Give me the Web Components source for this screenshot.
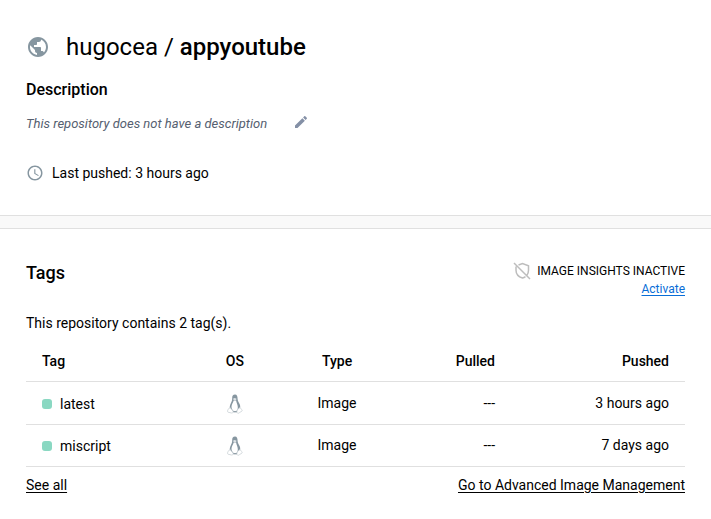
<!DOCTYPE html>
<html lang="en">
<head>
<meta charset="utf-8">
<title>hugocea / appyoutube</title>
<style>
  body {
    margin: 0;
    background: #fff;
    color: #000;
    font: 400 14px/20px Roboto, "Liberation Sans", sans-serif;
  }
</style>
</head>
<body>
<repo-page></repo-page>

<template id="icon-globe">
  <svg viewBox="0 0 24 24"><path d="M12 2C6.48 2 2 6.48 2 12s4.48 10 10 10 10-4.480 10-10S17.520 2 12 2zm-1 17.930c-3.950-.490-7-3.850-7-7.930 0-.620.080-1.210.210-1.790L9 15v1c0 1.100.900 2 2 2v1.930zm6.900-2.540c-.260-.810-1-1.390-1.900-1.390h-1v-3c0-.550-.450-1-1-1H8v-2h2c.550 0 1-.450 1-1V7h2c1.100 0 2-.900 2-2v-.410c2.930 1.190 5 4.060 5 7.410 0 2.080-.800 3.970-2.100 5.390z"/></svg>
</template>
<template id="icon-pencil">
  <svg viewBox="0 0 24 24"><path d="M3 17.250V21h3.750L17.810 9.940l-3.750-3.750L3 17.250zM20.710 7.040c.390-.390.390-1.020 0-1.410l-2.340-2.340c-.390-.390-1.020-.390-1.410 0l-1.830 1.830 3.750 3.750 1.830-1.830z"/></svg>
</template>
<template id="icon-clock">
  <svg viewBox="0 0 24 24"><path d="M11.990 2C6.470 2 2 6.480 2 12s4.470 10 9.990 10C17.520 22 22 17.520 22 12S17.520 2 11.990 2zM12 20c-4.420 0-8-3.580-8-8s3.580-8 8-8 8 3.580 8 8-3.580 8-8 8zm.500-13H11v6l5.250 3.150.750-1.230-4.500-2.670z"/></svg>
</template>
<template id="icon-shield-off">
  <svg viewBox="0 0 18 18" fill="none" stroke="currentColor" stroke-width="1.500"><path d="M5.500 3 9.500 1.500l6 2.200v4.600c0 1.900-.600 3.600-1.600 5M3 4.500v3.800c0 3.800 2.700 6.600 6.500 7.700 1.100-.300 2.100-.800 3-1.400M1 1l16 16"/></svg>
</template>
<template id="icon-linux">
  <svg viewBox="0 0 16 20">
    <path d="M8 .500C6 .500 5 2 5.200 4.500 5.300 7 4 8.500 3.200 10.700c-.600 1.600-.500 3-.200 4.300L6 18h4l3-3c.400-1.800.300-3.200-.300-4.700-.800-2-2-3.200-2.100-5.300C10.500 2 10 .500 8 .500z" fill="#8696a0"/>
    <path d="M6.700 6.500C6 9 4.700 10.300 4.500 12.500c-.100 1.800.800 3.500 2.200 4.500h2.700c1-.800 1.500-2.200 1.400-4-.100-2.500-1.300-4-1.700-6.500z" fill="#fff"/>
    <path d="M6.200 4.600 7.800 4l1.700.700-.300 1.100-1.400.700-1.400-.800z" fill="#dfe4e7"/>
    <path d="M3 13.500 6 17c.500 1-.300 2.200-1.500 2L1 18.200c-.700-.300-.300-1.200-.300-2 0-.700.300-1 1-1.200zM13 13.500l-2.500 2c-.400 1-.800 2.300-.400 3.200.500.900 1.600.600 2.300 0l2.600-1.700c.500-.500 0-1-.400-1.500z" fill="#fff" stroke="#c3cbd0" stroke-width=".7"/>
    <path d="M6.300 18.200h3.500" stroke="#b5bec4" stroke-width=".8"/>
  </svg>
</template>

<template id="t-page">
  <style>:host { display: block; }</style>
  <repo-summary owner="hugocea" name="appyoutube" pushed="3 hours ago">This repository does not have a description</repo-summary>
  <section-band></section-band>
  <tags-panel></tags-panel>
</template>

<template id="t-summary">
  <style>
    :host { display: flex; flex-direction: column; align-items: flex-start; padding: 30px 26px 32px; }
    h1, h2, p { margin: 0; }
    h1 { display: flex; align-items: center; gap: 16px; font-size: 24px; line-height: 34px; font-weight: 400; }
    h1 b { font-weight: 500; }
    h2 { margin-top: 14px; font-size: 16px; line-height: 24px; font-weight: 500; }
    .desc { display: flex; align-items: flex-start; gap: 26px; margin-top: 12px; font-size: 13px; font-style: italic; color: #556070; }
    button { display: flex; padding: 0; border: 0; background: none; color: #8490a6; cursor: pointer; }
    .pushed { display: flex; align-items: center; gap: 8px; margin-top: 29px; }
    ui-icon { color: #8696a0; }
    button ui-icon { color: inherit; }
  </style>
  <h1><ui-icon name="globe" size="24"></ui-icon><span><span id="owner"></span> / <b id="name"></b></span></h1>
  <h2>Description</h2>
  <div class="desc"><slot></slot><button type="button" aria-label="Edit description"><ui-icon name="pencil" size="16"></ui-icon></button></div>
  <p class="pushed"><ui-icon name="clock" size="18"></ui-icon><span>Last pushed: <span id="pushed"></span></span></p>
</template>

<template id="t-band">
  <style>:host { display: block; height: 12px; background: #f9f9f9; border: solid #e0e0e0; border-width: 1px 0; }</style>
</template>

<template id="t-panel">
  <style>
    :host { display: block; padding: 33px 26px 24px; }
    header, footer { display: flex; justify-content: space-between; }
    h2, p { margin: 0; }
    h2 { font-size: 18px; line-height: 22px; font-weight: 500; }
    .insights { display: flex; flex-direction: column; align-items: flex-end; font-size: 12px; line-height: 18px; }
    .status { display: flex; align-items: center; gap: 6px; }
    .status ui-icon { color: #bdbdbd; }
    .count { margin-top: 15px; }
    a { color: inherit; text-underline-offset: 2px; }
    .activate { color: #086dd7; }
    footer { margin-top: 8px; }
  </style>
  <header>
    <h2>Tags</h2>
    <div class="insights">
      <span class="status"><ui-icon name="shield-off" size="18"></ui-icon>IMAGE INSIGHTS INACTIVE</span>
      <a class="activate" href="#activate">Activate</a>
    </div>
  </header>
  <p class="count">This repository contains 2 tag(s).</p>
  <tag-table></tag-table>
  <footer>
    <a href="#tags">See all</a>
    <a href="#manage">Go to Advanced Image Management</a>
  </footer>
</template>

<template id="t-table">
  <style>
    :host { display: block; margin-top: 8px; }
    table { width: 100%; table-layout: fixed; border-collapse: collapse; }
    th, td { padding: 11px 16px; border-bottom: 1px solid #e0e0e0; text-align: center; }
    th { padding: 10px 16px; font-weight: 500; }
    td:nth-child(-n+2) { padding: 12px 16px 10px; }
    tr:last-child td { padding: 10px 16px 11px; }
    tr:last-child td:nth-child(-n+2) { padding: 11px 16px 10px; }
    th:first-child, td:first-child { text-align: left; }
    th:nth-child(n+4), td:nth-child(n+4) { text-align: right; }
    .tag { width: 26%; } .os { width: 11.4%; } .type { width: 19.6%; } .pulled { width: 16.6%; }
    thead th { padding: 10px 16px; }
    td ui-icon { margin: 0 auto; }
  </style>
  <table>
    <colgroup><col class="tag"><col class="os"><col class="type"><col class="pulled"><col></colgroup>
    <thead><tr><th scope="col">Tag</th><th scope="col">OS</th><th scope="col">Type</th><th scope="col">Pulled</th><th scope="col">Pushed</th></tr></thead>
    <tbody>
      <tr><td><tag-name>latest</tag-name></td><td><ui-icon name="linux" size="20"></ui-icon></td><td>Image</td><td>---</td><td>3 hours ago</td></tr>
      <tr><td><tag-name>miscript</tag-name></td><td><ui-icon name="linux" size="20"></ui-icon></td><td>Image</td><td>---</td><td>7 days ago</td></tr>
    </tbody>
  </table>
</template>

<template id="t-tag">
  <style>
    :host { display: flex; align-items: center; gap: 8px; }
    i { width: 10px; height: 10px; border-radius: 3px; background: #8ad8c2; }
  </style>
  <i></i><slot></slot>
</template>

<script>
  const copy = id => document.getElementById(id).content.cloneNode(true);

  class TemplateElement extends HTMLElement {
    connectedCallback() {
      if (this.shadowRoot) return;
      this.attachShadow({ mode: "open" }).append(copy(this.constructor.template));
      this.ready();
    }
    ready() {}
  }

  class UiIcon extends HTMLElement {
    connectedCallback() {
      if (this.shadowRoot) return;
      const size = Number(this.getAttribute("size"));
      const root = this.attachShadow({ mode: "open" });
      root.innerHTML = `<style>
        :host { display: block; width: ${size}px; height: ${size}px; flex: none; }
        svg { display: block; width: 100%; height: 100%; fill: currentColor; }
        svg[fill="none"] { fill: none; }
      </style>`;
      root.append(copy("icon-" + this.getAttribute("name")));
      root.querySelector("svg").setAttribute("aria-hidden", "true");
    }
  }

  class RepoSummary extends TemplateElement {
    static template = "t-summary";
    ready() {
      for (const key of ["owner", "name", "pushed"])
        this.shadowRoot.getElementById(key).textContent = this.getAttribute(key);
    }
  }
  class SectionBand extends TemplateElement { static template = "t-band"; }
  class TagName extends TemplateElement { static template = "t-tag"; }
  class TagTable extends TemplateElement { static template = "t-table"; }
  class TagsPanel extends TemplateElement { static template = "t-panel"; }
  class RepoPage extends TemplateElement { static template = "t-page"; }

  customElements.define("ui-icon", UiIcon);
  customElements.define("tag-name", TagName);
  customElements.define("tag-table", TagTable);
  customElements.define("section-band", SectionBand);
  customElements.define("repo-summary", RepoSummary);
  customElements.define("tags-panel", TagsPanel);
  customElements.define("repo-page", RepoPage);
</script>
</body>
</html>
